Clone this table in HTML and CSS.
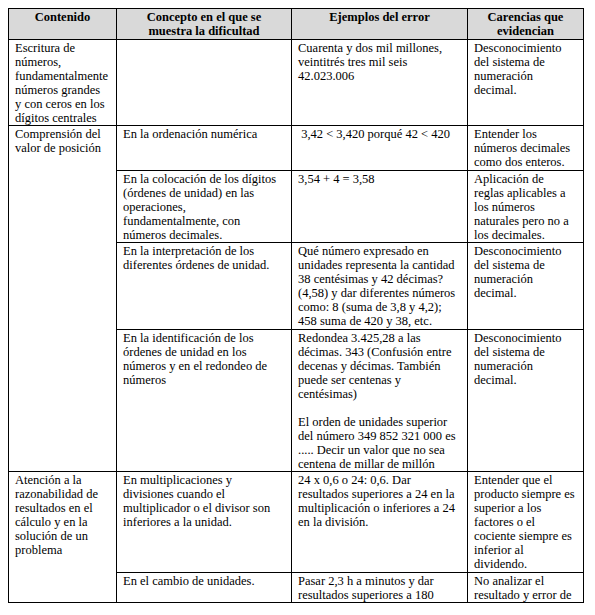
FILE: index.html
```html
<!DOCTYPE html>
<html lang="es">
<head>
<meta charset="utf-8">
<title>Errores</title>
<link rel="stylesheet" href="styles.css">
</head>
<body>
<table class="grid">
  <colgroup>
    <col class="c1"><col class="c2"><col class="c3"><col class="c4">
  </colgroup>
  <thead>
    <tr class="head">
      <th>Contenido</th>
      <th>Concepto en el que se<br>muestra la dificultad</th>
      <th>Ejemplos del error</th>
      <th>Carencias que<br>evidencian</th>
    </tr>
  </thead>
  <tbody>
    <tr>
      <td>Escritura de<br>números,<br>fundamentalmente<br>números grandes<br>y con ceros en los<br>dígitos centrales</td>
      <td></td>
      <td>Cuarenta y dos mil millones,<br>veintitrés tres mil seis<br>42.023.006</td>
      <td>Desconocimiento<br>del sistema de<br>numeración<br>decimal.</td>
    </tr>
    <tr>
      <td rowspan="4">Comprensión del<br>valor de posición</td>
      <td>En la ordenación numérica</td>
      <td>&nbsp;3,42 &lt; 3,420 porqué 42 &lt; 420</td>
      <td>Entender los<br>números decimales<br>como dos enteros.</td>
    </tr>
    <tr>
      <td>En la colocación de los dígitos<br>(órdenes de unidad) en las<br>operaciones,<br>fundamentalmente, con<br>números decimales.</td>
      <td>3,54 + 4 = 3,58</td>
      <td>Aplicación de<br>reglas aplicables a<br>los números<br>naturales pero no a<br>los decimales.</td>
    </tr>
    <tr>
      <td>En la interpretación de los<br>diferentes órdenes de unidad.</td>
      <td>Qué número expresado en<br>unidades representa la cantidad<br>38 centésimas y 42 décimas?<br>(4,58) y dar diferentes números<br>como: 8 (suma de 3,8 y 4,2);<br>458 suma de 420 y 38, etc.</td>
      <td>Desconocimiento<br>del sistema de<br>numeración<br>decimal.</td>
    </tr>
    <tr>
      <td>En la identificación de los<br>órdenes de unidad en los<br>números y en el redondeo de<br>números</td>
      <td>Redondea 3.425,28 a las<br>décimas. 343 (Confusión entre<br>decenas y décimas. También<br>puede ser centenas y<br>centésimas)<br><br>El orden de unidades superior<br>del número 349 852 321 000 es<br>..... Decir un valor que no sea<br>centena de millar de millón</td>
      <td>Desconocimiento<br>del sistema de<br>numeración<br>decimal.</td>
    </tr>
    <tr>
      <td rowspan="2">Atención a la<br>razonabilidad de<br>resultados en el<br>cálculo y en la<br>solución de un<br>problema</td>
      <td>En multiplicaciones y<br>divisiones cuando el<br>multiplicador o el divisor son<br>inferiores a la unidad.</td>
      <td>24 x 0,6 o 24: 0,6. Dar<br>resultados superiores a 24 en la<br>multiplicación o inferiores a 24<br>en la división.</td>
      <td>Entender que el<br>producto siempre es<br>superior a los<br>factores o el<br>cociente siempre es<br>inferior al<br>dividendo.</td>
    </tr>
    <tr>
      <td>En el cambio de unidades.</td>
      <td>Pasar 2,3 h a minutos y dar<br>resultados superiores a 180</td>
      <td>No analizar el<br>resultado y error de</td>
    </tr>
  </tbody>
</table>
</body>
</html>
```

FILE: styles.css
```css
html, body {
  margin: 0;
  padding: 0;
  background: #ffffff;
}
body {
  padding: 8px 0 0 8px;
  font-family: "Liberation Serif", "Times New Roman", serif;
  font-size: 12.5px;
  line-height: 14px;
  color: #000000;
}
.grid {
  border-collapse: collapse;
  table-layout: fixed;
  width: 575px;
}
.c1 { width: 108px; }
.c2 { width: 175px; }
.c3 { width: 176px; }
.c4 { width: 116px; }
.grid th,
.grid td {
  border: 1px solid #000000;
  padding: 1px 4px 0.5px 6px;
  vertical-align: top;
  text-align: left;
  white-space: nowrap;
  overflow: hidden;
}
.head th {
  background: #d9d9d9;
  font-weight: bold;
  text-align: center;
  padding-left: 4px;
  padding-right: 4px;
}
```
